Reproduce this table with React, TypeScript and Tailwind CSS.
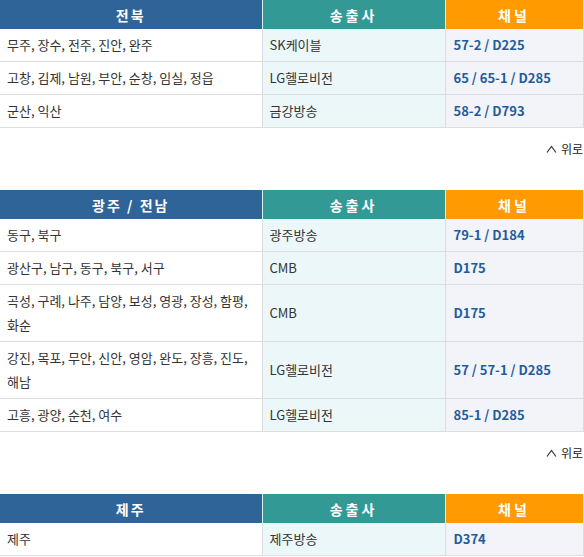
import React from 'react'

type Row = { area: string; provider: string; channel: string }

interface Region {
  name: string
  rows: Row[]
  showTop?: boolean
}

const regions: Region[] = [
  {
    name: '전북',
    showTop: true,
    rows: [
      { area: '무주, 장수, 전주, 진안, 완주', provider: 'SK케이블', channel: '57-2 / D225' },
      { area: '고창, 김제, 남원, 부안, 순창, 임실, 정읍', provider: 'LG헬로비전', channel: '65 / 65-1 / D285' },
      { area: '군산, 익산', provider: '금강방송', channel: '58-2 / D793' },
    ],
  },
  {
    name: '광주 / 전남',
    showTop: true,
    rows: [
      { area: '동구, 북구', provider: '광주방송', channel: '79-1 / D184' },
      { area: '광산구, 남구, 동구, 북구, 서구', provider: 'CMB', channel: 'D175' },
      { area: '곡성, 구례, 나주, 담양, 보성, 영광, 장성, 함평, 화순', provider: 'CMB', channel: 'D175' },
      { area: '강진, 목포, 무안, 신안, 영암, 완도, 장흥, 진도, 해남', provider: 'LG헬로비전', channel: '57 / 57-1 / D285' },
      { area: '고흥, 광양, 순천, 여수', provider: 'LG헬로비전', channel: '85-1 / D285' },
    ],
  },
  {
    name: '제주',
    rows: [{ area: '제주', provider: '제주방송', channel: 'D374' }],
  },
]

function RegionTable({ region }: { region: Region }) {
  return (
    <table className="w-[583px] table-fixed border-collapse text-[13px] leading-[24px] text-[#333]">
      <colgroup>
        <col className="w-[262px]" />
        <col className="w-[183px]" />
        <col className="w-[138px]" />
      </colgroup>
      <thead>
        <tr className="h-[29px] text-[14px] font-bold text-white">
          <th className="bg-[#2f6498] border-r border-[#dfeef2] tracking-[2px]">{region.name}</th>
          <th className="bg-[#339995] border-r border-[#f3e6cf] tracking-[3px]">송출사</th>
          <th className="bg-[#ff9a00] border-r border-[#dddddd] tracking-[3px]">채널</th>
        </tr>
      </thead>
      <tbody>
        {region.rows.map((row, i) => (
          <tr key={i} className="border-b border-[#dddddd]">
            <td className="bg-white border-r border-[#dddddd] px-[7px] py-[4px] align-middle">{row.area}</td>
            <td className="bg-[#ebf7f8] border-r border-[#dddddd] px-[7px] py-[4px] align-middle">{row.provider}</td>
            <td className="bg-[#f2f4f9] border-r border-[#dddddd] px-[8px] py-[4px] align-middle font-bold text-[#1f5c9e]">
              {row.channel}
            </td>
          </tr>
        ))}
      </tbody>
    </table>
  )
}

export default function App() {
  return (
    <div
      className="w-[584px] bg-white"
      style={{ fontFamily: '"Noto Sans CJK KR", "Noto Sans", sans-serif' }}
    >
      {regions.map(region => (
        <section key={region.name}>
          <RegionTable region={region} />
          {region.showTop && (
            <div className="flex justify-end pt-[10px] pb-[30px] pr-[1px]">
              <a href="#" className="flex items-center gap-[4px] text-[12px] leading-[22px] text-[#222]">
                <svg width="11" height="8" viewBox="0 0 11 8" fill="none" stroke="#333" strokeWidth="1.2">
                  <path d="M1 7.5 L5.5 1.5 L10 7.5" />
                </svg>
                <span>위로</span>
              </a>
            </div>
          )}
        </section>
      ))}
    </div>
  )
}
